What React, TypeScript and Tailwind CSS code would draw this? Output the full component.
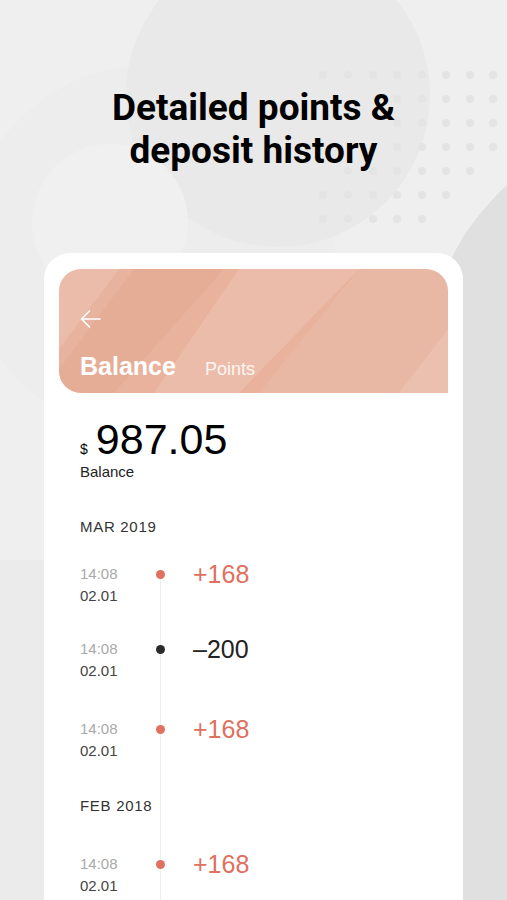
import React from "react";

type Entry = { time: string; date: string; amount: string; positive: boolean; mt: string };

const march: Entry[] = [
  { time: "14:08", date: "02.01", amount: "+168", positive: true, mt: "mt-[26px]" },
  { time: "14:08", date: "02.01", amount: "–200", positive: false, mt: "mt-[31px]" },
  { time: "14:08", date: "02.01", amount: "+168", positive: true, mt: "mt-[36px]" },
];

const feb: Entry[] = [{ time: "14:08", date: "02.01", amount: "+168", positive: true, mt: "mt-[37px]" }];

// dot grid in the top right corner of the backdrop
const dotRows: [number, number[]][] = [
  [75, [323, 348, 373, 397, 422, 446, 470, 493]],
  [99, [397, 422, 446, 470, 493]],
  [123, [397, 422, 446, 470, 493]],
  [147, [373, 397, 422, 446, 470, 493]],
  [171, [348, 373, 397, 422, 446, 470]],
  [195, [323, 348, 373, 397, 422, 446]],
  [219, [323, 348, 373, 397, 422]],
];

const Backdrop = () => (
  <svg className="absolute inset-0" width="507" height="900" viewBox="0 0 507 900">
    <rect width="507" height="900" fill="#efefef" />
    <circle cx="150" cy="250" r="185" fill="#ededed" />
    <path d="M507 185 C 465 225, 440 265, 432 330 L 432 900 L 507 900 Z" fill="#e0e0e0" />
    <circle cx="278" cy="95" r="152" fill="#e9e9e9" />
    <circle cx="110" cy="222" r="78" fill="#f0f0f0" />
    <rect x="0" y="560" width="44" height="340" fill="#ebebeb" />
    {dotRows.map(([y, xs]) =>
      xs.map((x) => <circle key={`${x}-${y}`} cx={x} cy={y} r="4" fill="#e4e4e4" />)
    )}
  </svg>
);

const Row = ({ e }: { e: Entry }) => (
  <div className={`flex h-[44px] ${e.mt}`}>
    <div className="w-[75px] text-[15px] leading-[22px]">
      <div className="text-[#a9a9a9]">{e.time}</div>
      <div className="text-[#444]">{e.date}</div>
    </div>
    <div className="w-[10px] h-[22px] flex items-center justify-center relative">
      <div className={`w-[9px] h-[9px] rounded-full ${e.positive ? "bg-[#e0705f]" : "bg-[#2b2b2b]"}`} />
    </div>
    <div className={`ml-[28px] text-[25px] leading-[22px] ${e.positive ? "text-[#e0705f]" : "text-[#222]"}`}>
      {e.amount}
    </div>
  </div>
);

export default function App() {
  return (
    <div className="relative w-[507px] h-[900px] overflow-hidden">
      <Backdrop />

      <div className="relative flex flex-col items-center">
        {/* TITLE */}
        <h1 className="pt-[86px] text-center text-[37px] leading-[43px] font-bold text-black font-['Roboto',sans-serif]">
          Detailed points &amp;
          <br />
          deposit history
        </h1>

        {/* PHONE CARD */}
        <div className="mt-[81px] w-[419px] h-[700px] bg-white rounded-t-[26px] px-[15px] pt-[16px] font-['Liberation_Sans',Arial,sans-serif]">
          {/* HEADER */}
          <div className="relative w-[389px] h-[124px] rounded-tl-[22px] rounded-tr-[22px] rounded-bl-[22px] overflow-hidden bg-[#e8b29d]">
            <svg className="absolute inset-0" width="389" height="124" viewBox="0 0 389 124">
              <polygon points="0,0 75,0 0,100" fill="#ffffff" opacity="0.14" />
              <polygon points="60,0 165,0 55,124 0,124 0,80" fill="#e3a28a" opacity="0.35" />
              <polygon points="180,0 300,0 180,124 95,124" fill="#ffffff" opacity="0.14" />
              <polygon points="300,0 389,0 389,124 200,124" fill="#ffffff" opacity="0.08" />
              <polygon points="389,60 389,124 340,124" fill="#ffffff" opacity="0.12" />
            </svg>
            <div className="relative pl-[21px]">
              <svg className="mt-[40px]" width="22" height="20" viewBox="0 0 22 20" fill="none" stroke="#fff" strokeWidth="1.6" strokeLinecap="round" strokeLinejoin="round">
                <path d="M20 10H1.5M9.5 2L1.5 10L9.5 18" />
              </svg>
              <div className="mt-[23px] flex items-baseline">
                <span className="text-[25px] leading-[28px] font-bold text-white">Balance</span>
                <span className="ml-[29px] text-[18px] leading-[28px] text-white/85">Points</span>
              </div>
            </div>
          </div>

          {/* CONTENT */}
          <div className="pl-[21px]">
            <div className="mt-[24px] h-[44px] flex items-baseline text-black">
              <span className="text-[14px] leading-none">$</span>
              <span className="ml-[8px] text-[43px] leading-[44px]">987.05</span>
            </div>
            <div className="mt-px text-[15px] leading-[20px] text-[#222]">Balance</div>

            <div className="relative flex flex-col">
              <div className="absolute left-[80px] top-[92px] w-px h-[400px] bg-[#eeeeee]" />
              <div className="relative flex flex-col">
                <div className="mt-[35px] text-[15px] leading-[20px] tracking-[0.7px] text-[#333]">MAR 2019</div>
                {march.map((e, i) => (
                  <Row key={i} e={e} />
                ))}
                <div className="mt-[34px] text-[15px] leading-[20px] tracking-[0.7px] text-[#333]">FEB 2018</div>
                {feb.map((e, i) => (
                  <Row key={i} e={e} />
                ))}
              </div>
            </div>
          </div>
        </div>
      </div>
    </div>
  );
}
